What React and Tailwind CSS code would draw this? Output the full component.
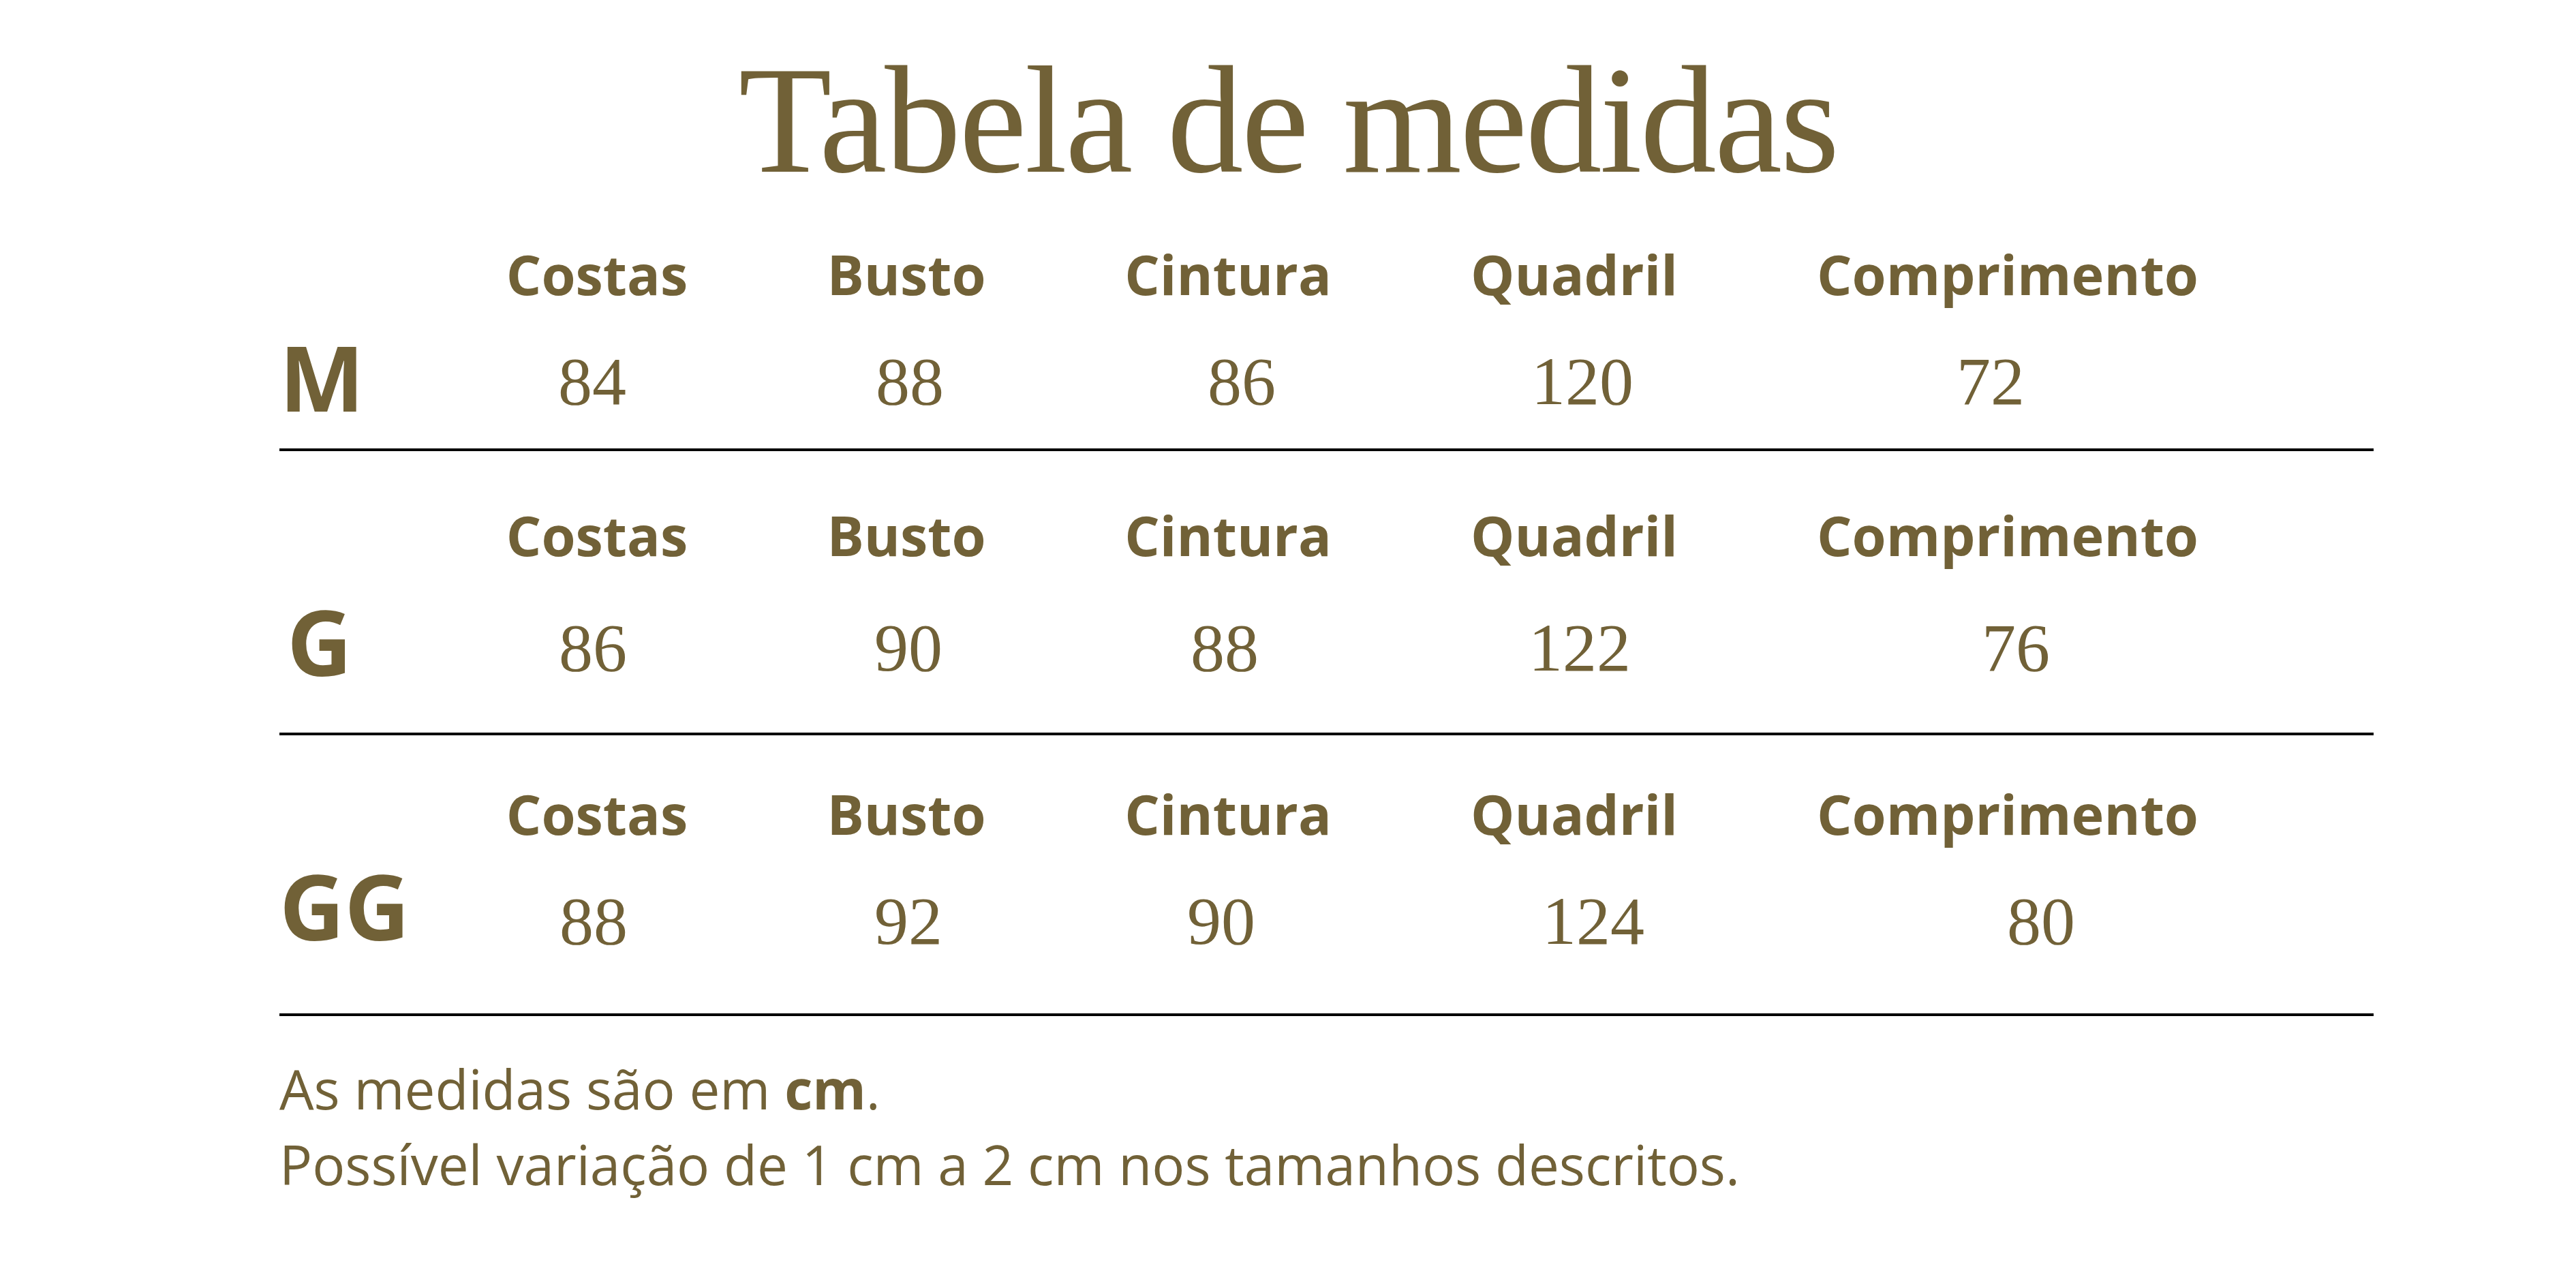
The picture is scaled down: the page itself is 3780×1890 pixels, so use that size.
const serif = "font-['Liberation_Serif','Times_New_Roman',serif]";
const sans = "font-['Open_Sans','Liberation_Sans',sans-serif]";

const headers = ['Costas', 'Busto', 'Cintura', 'Quadril', 'Comprimento'];

const rows = [
  {
    size: 'M',
    blockMt: '',
    labelPad: 'pt-[126px]',
    numMt: 'mt-[68px]',
    lineMt: 'mt-[39px]',
    vals: [
      { v: '84', s: 'pr-[14px]' },
      { v: '88', s: 'pl-[10px]' },
      { v: '86', s: 'pl-[40px]' },
      { v: '120', s: 'pl-[24px]' },
      { v: '72', s: 'pr-[50px]' },
    ],
  },
  {
    size: 'G',
    blockMt: 'mt-[82px]',
    labelPad: 'pt-[131px] pl-[11px]',
    numMt: 'mt-[76px]',
    lineMt: 'mt-[68px]',
    vals: [
      { v: '86', s: 'pr-[12px]' },
      { v: '90', s: 'pl-[6px]' },
      { v: '88', s: 'pr-[10px]' },
      { v: '122', s: 'pl-[16px]' },
      { v: '76', s: 'pl-[24px]' },
    ],
  },
  {
    size: 'GG',
    blockMt: 'mt-[74px]',
    labelPad: 'pt-[110px]',
    numMt: 'mt-[68px]',
    lineMt: 'mt-[85px]',
    vals: [
      { v: '88', s: 'pr-[10px]' },
      { v: '92', s: 'pl-[6px]' },
      { v: '90', s: 'pr-[20px]' },
      { v: '124', s: 'pl-[56px]' },
      { v: '80', s: 'pl-[98px]' },
    ],
  },
];

const cols = 'grid grid-cols-[454px_454px_490px_526px_746px]';

const App = () => {
  return (
    <div className="w-[3780px] h-[1890px] bg-white text-[#716137] overflow-hidden">
      <h1 className={`${serif} pt-[64px] text-center text-[224px] leading-none tracking-[-3px] font-normal`}>
        Tabela de medidas
      </h1>

      <div className="ml-[410px] mt-[73px] w-[3073px]">
        {rows.map((row) => (
          <div key={row.size} className={row.blockMt}>
            <div className="flex items-start">
              <div className={`w-[239px] shrink-0 ${row.labelPad} ${sans} font-bold text-[132px] leading-none`}>
                {row.size}
              </div>
              <div>
                <div className={cols}>
                  {headers.map((h) => (
                    <div key={h} className={`${sans} font-bold text-[81px] leading-none text-center`}>
                      {h}
                    </div>
                  ))}
                </div>
                <div className={`${cols} ${row.numMt}`}>
                  {row.vals.map((n, i) => (
                    <div key={i} className={`flex justify-center ${n.s} ${serif} text-[100px] leading-none`}>
                      {n.v}
                    </div>
                  ))}
                </div>
              </div>
            </div>
            <div className={`h-[4px] bg-black ${row.lineMt}`} />
          </div>
        ))}

        <div className={`mt-[50px] ${sans} text-[80px] leading-[111px]`}>
          <p>
            As medidas são em <span className="font-bold">cm</span>.
          </p>
          <p>Possível variação de 1 cm a 2 cm nos tamanhos descritos.</p>
        </div>
      </div>
    </div>
  );
};

export default App;
